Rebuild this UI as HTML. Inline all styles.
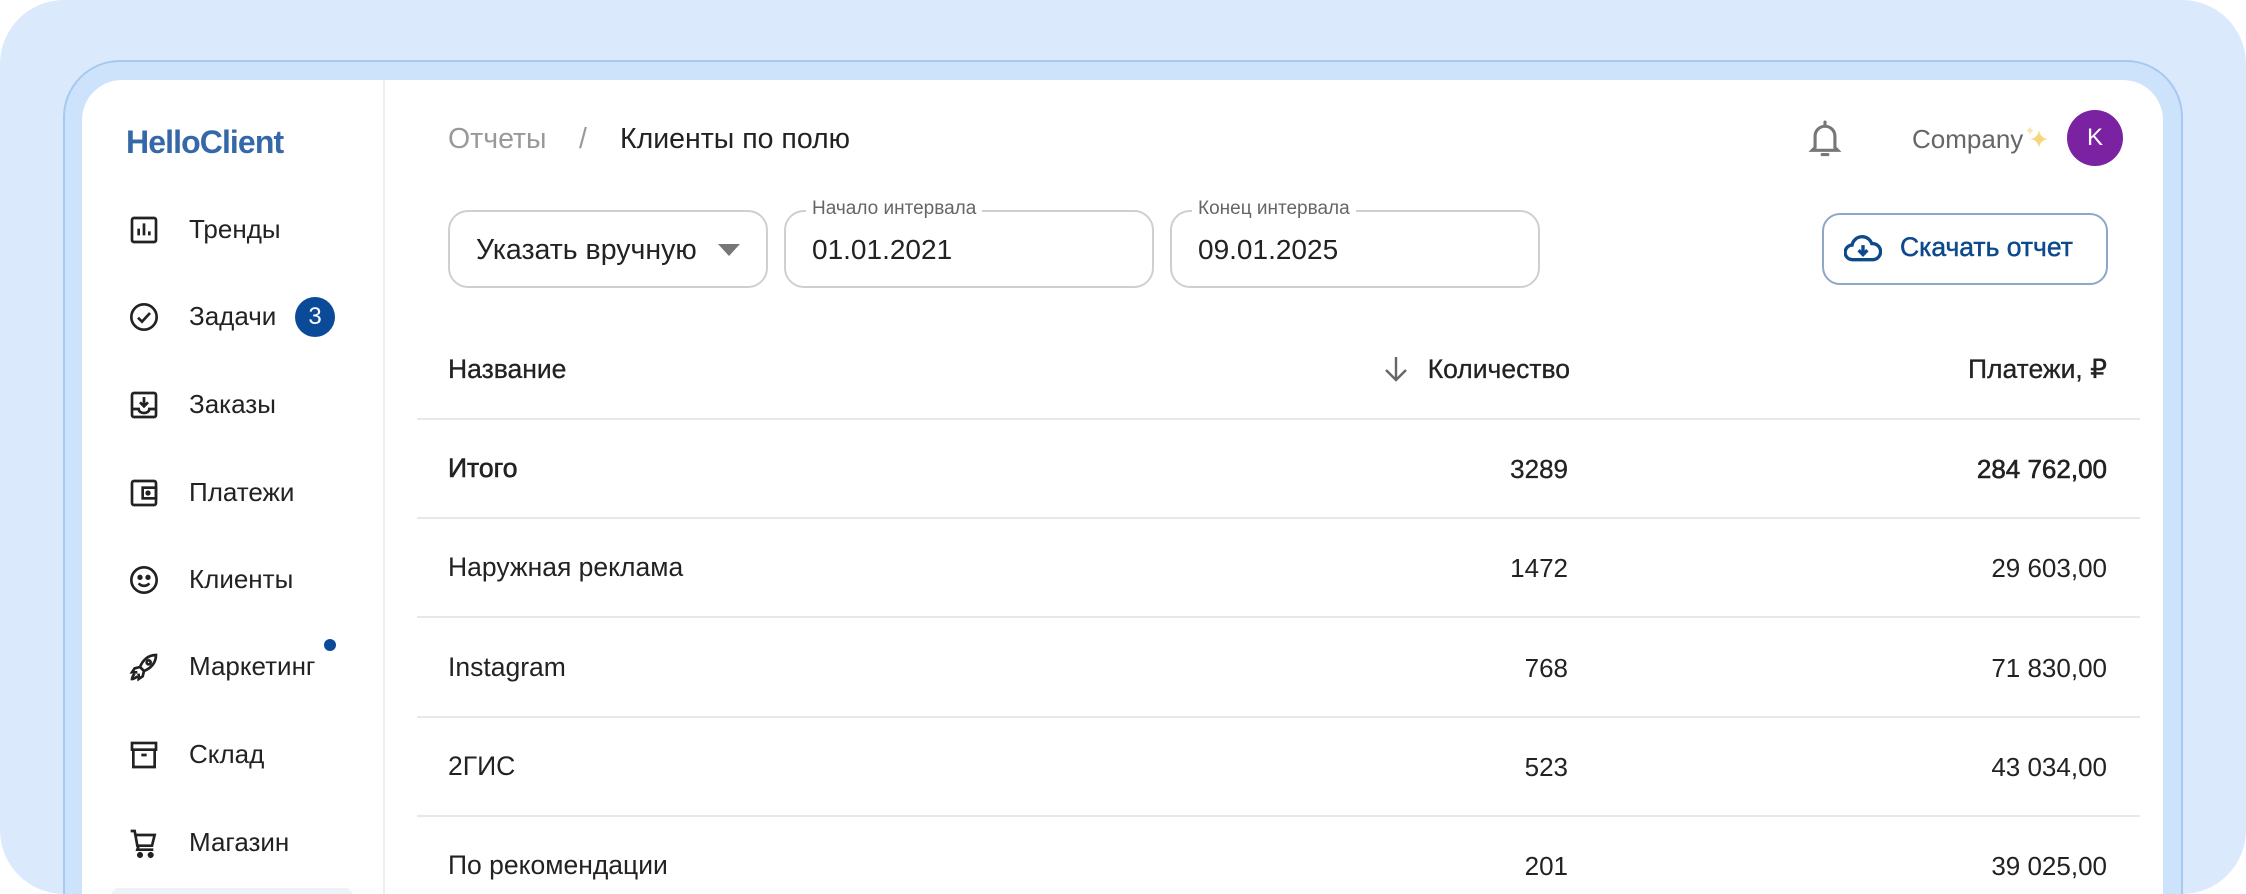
<!DOCTYPE html>
<html><head><meta charset="utf-8"><style>
*{margin:0;padding:0;box-sizing:border-box}
html,body{width:2246px;height:894px;overflow:hidden}
body{background:#fff;font-family:"Liberation Sans",sans-serif;color:#222}
#w{position:relative;width:2246px;height:894px;overflow:hidden}
.bg{position:absolute;left:0;top:0;width:2246px;height:894px;background:#dbe9fd;border-radius:64px}
.frame{position:absolute;left:63px;top:60px;width:2120px;height:834px;background:#cde2fb;border:2px solid #a7c9f0;border-bottom:none;border-radius:57px 57px 0 0}
.card{position:absolute;left:82px;top:80px;width:2081px;height:814px;background:#fff;border-radius:40px 40px 0 0}
.div{position:absolute;left:383px;top:80px;width:2px;height:814px;background:#eee}
.a{position:absolute;white-space:nowrap}
.logo{left:126px;top:124px;font-size:32px;font-weight:bold;color:#3568a8;letter-spacing:-0.9px}
.nav{left:189px;font-size:26px;color:#222}
.ic{position:absolute;left:128px;width:32px;height:32px}
.t{font-size:26.5px}
.n{font-size:26px}
.field{position:absolute;top:210px;height:78px;border:2px solid #cfcfcf;border-radius:20px;background:#fff}
.lbl{position:absolute;top:-14px;background:#fff;padding:0 6px;font-size:19px;color:#666}
.val{position:absolute;left:26px;top:22px;font-size:28px;color:#222}
.line{position:absolute;left:417px;width:1723px;height:2px;background:#e8e8e8}
.r{text-align:right}
.h{font-weight:500;-webkit-text-stroke:0.3px #222}
</style></head><body><div id="w">
<div class="bg"></div>
<div class="frame"></div>
<div class="card"></div>
<div class="div"></div>

<div class="a logo">HelloClient</div>

<svg class="ic" style="top:214px" viewBox="0 0 24 24" fill="none" stroke="#222" stroke-width="2"><rect x="3" y="3" width="18" height="18" rx="1.5"/><path d="M8 16V11M12 16V7M16 16v-3"/></svg>
<div class="a nav" style="top:214px">Тренды</div>
<svg class="ic" style="top:301px" viewBox="0 0 24 24" fill="none" stroke="#222" stroke-width="2"><circle cx="12" cy="12" r="9.5"/><path d="M7.5 12.5l3 3 6-6.5"/></svg>
<div class="a nav" style="top:301px">Задачи</div>
<div class="a" style="left:295px;top:297px;width:40px;height:40px;border-radius:50%;background:#0b4a98;color:#fff;font-size:24px;text-align:center;line-height:40px">3</div>
<svg class="ic" style="top:389px" viewBox="0 0 24 24" fill="none" stroke="#222" stroke-width="2"><rect x="3" y="3" width="18" height="18" rx="1.5"/><path d="M3 15h5c0 2 2 3 4 3s4-1 4-3h5M12 6v7M9 10l3 3 3-3"/></svg>
<div class="a nav" style="top:389px">Заказы</div>
<svg class="ic" style="top:477px" viewBox="0 0 24 24" fill="none" stroke="#222" stroke-width="2"><rect x="3" y="3" width="18" height="18" rx="1.5"/><rect x="11" y="8" width="10" height="8"/><circle cx="15" cy="12" r="1" fill="#222"/></svg>
<div class="a nav" style="top:477px">Платежи</div>
<svg class="ic" style="top:564px" viewBox="0 0 24 24" fill="none" stroke="#222" stroke-width="2"><circle cx="12" cy="12" r="9.5"/><circle cx="9" cy="10" r="1" fill="#222"/><circle cx="15" cy="10" r="1" fill="#222"/><path d="M8 14.5c2 2.5 6 2.5 8 0"/></svg>
<div class="a nav" style="top:564px">Клиенты</div>
<svg class="ic" style="top:651px" viewBox="0 0 24 24" fill="none" stroke="#222" stroke-width="2"><path d="M21 3c-6 0-10 4-12 9l3 3c5-2 9-6 9-12zM9 12l-4 1 -2 3 4 0M12 15l-1 4-3 2 0-4"/><circle cx="15.5" cy="8.5" r="1.5"/><path d="M5 17c-1 1-2 3-2 4 1 0 3-1 4-2"/></svg>
<div class="a nav" style="top:651px">Маркетинг</div>
<div class="a" style="left:324px;top:639px;width:12px;height:12px;border-radius:50%;background:#0b4a98"></div>
<svg class="ic" style="top:739px" viewBox="0 0 24 24" fill="none" stroke="#222" stroke-width="2"><rect x="3" y="3" width="18" height="5"/><path d="M4 8v13h16V8M10 12h4"/></svg>
<div class="a nav" style="top:739px">Склад</div>
<svg class="ic" style="top:827px" viewBox="0 0 24 24" fill="none" stroke="#222" stroke-width="2"><path d="M2 3h3l2 11h11l2-8H6M8 14l-1 3h12"/><circle cx="9" cy="21" r="1.3" fill="#222"/><circle cx="17" cy="21" r="1.3" fill="#222"/></svg>
<div class="a nav" style="top:827px">Магазин</div>
<div class="a" style="left:112px;top:888px;width:240px;height:6px;border-radius:6px 6px 0 0;background:#eef2f7"></div>

<div class="a" style="left:448px;top:123px;font-size:28.5px;color:#999">Отчеты</div>
<div class="a" style="left:579px;top:123px;font-size:28.5px;color:#999">/</div>
<div class="a" style="left:620px;top:123px;font-size:28.5px;color:#222">Клиенты по полю</div>

<svg class="a" style="left:1808px;top:119px" width="34" height="40" viewBox="0 0 24 28" fill="none" stroke="#777" stroke-width="2.2"><path d="M5 20V12a7 7 0 0 1 14 0v8l2 2H3z"/><path d="M12 2v3M10 25h4" stroke-linecap="round"/></svg>
<div class="a" style="left:1912px;top:124px;font-size:26px;color:#666">Company</div>
<svg class="a" style="left:2024px;top:124px" width="26" height="28" viewBox="0 0 26 28"><path d="M15 6 Q16 14 24 15 Q16 16 15 24 Q14 16 6 15 Q14 14 15 6z" fill="#f5d77a"/><path d="M6 2 Q6.5 6 10 6.5 Q6.5 7 6 11 Q5.5 7 2 6.5 Q5.5 6 6 2z" fill="#f7e3a6"/></svg>
<div class="a" style="left:2067px;top:110px;width:56px;height:56px;border-radius:50%;background:#7b22a3;color:#fff;font-size:24px;text-align:center;line-height:56px">K</div>

<div class="field" style="left:448px;width:320px"><div class="val" style="font-size:28.5px">Указать вручную</div>
<svg class="a" style="left:268px;top:32px" width="22" height="12" viewBox="0 0 22 12"><path d="M0 0h22L11 12z" fill="#777"/></svg></div>
<div class="field" style="left:784px;width:370px"><div class="lbl" style="left:20px">Начало интервала</div><div class="val">01.01.2021</div></div>
<div class="field" style="left:1170px;width:370px"><div class="lbl" style="left:20px">Конец интервала</div><div class="val">09.01.2025</div></div>

<div class="a" style="left:1822px;top:213px;width:286px;height:72px;border:2px solid #8fa7c6;border-radius:18px"></div>
<svg class="a" style="left:1844px;top:231px" width="38" height="34" viewBox="0 0 26 22" fill="none" stroke="#0d4a8c" stroke-width="2.3"><path d="M7 19H6a5 5 0 0 1-.5-10A7 7 0 0 1 19 8a5.5 5.5 0 0 1 1 11H7z"/><path d="M13 9v6M10 12.5l3 3 3-3"/></svg>
<div class="a" style="left:1900px;top:232px;font-size:26.5px;color:#0d4a8c;-webkit-text-stroke:0.5px #0d4a8c">Скачать отчет</div>

<div class="a t h" style="left:448px;top:354px">Название</div>
<svg class="a" style="left:1383px;top:355px" width="26" height="28" viewBox="0 0 26 28" fill="none" stroke="#666" stroke-width="2.4"><path d="M13 2v23M3 15l10 10 10-10"/></svg>
<div class="a t h r" style="right:676px;top:354px">Количество</div>
<div class="a t h r" style="right:139px;top:354px">Платежи, ₽</div>
<div class="line" style="top:418px"></div>

<div class="a t h" style="left:448px;top:453px;-webkit-text-stroke:0.6px #222">Итого</div>
<div class="a n h r" style="right:678px;top:454px">3289</div>
<div class="a n h r" style="right:139px;top:454px;-webkit-text-stroke:0.6px #222">284 762,00</div>
<div class="line" style="top:517px"></div>

<div class="a t" style="left:448px;top:552px">Наружная реклама</div>
<div class="a n r" style="right:678px;top:553px">1472</div>
<div class="a n r" style="right:139px;top:553px">29 603,00</div>
<div class="line" style="top:616px"></div>

<div class="a t" style="left:448px;top:652px">Instagram</div>
<div class="a n r" style="right:678px;top:653px">768</div>
<div class="a n r" style="right:139px;top:653px">71 830,00</div>
<div class="line" style="top:716px"></div>

<div class="a t" style="left:448px;top:751px">2ГИС</div>
<div class="a n r" style="right:678px;top:752px">523</div>
<div class="a n r" style="right:139px;top:752px">43 034,00</div>
<div class="line" style="top:815px"></div>

<div class="a t" style="left:448px;top:850px">По рекомендации</div>
<div class="a n r" style="right:678px;top:851px">201</div>
<div class="a n r" style="right:139px;top:851px">39 025,00</div>
</div></body></html>
